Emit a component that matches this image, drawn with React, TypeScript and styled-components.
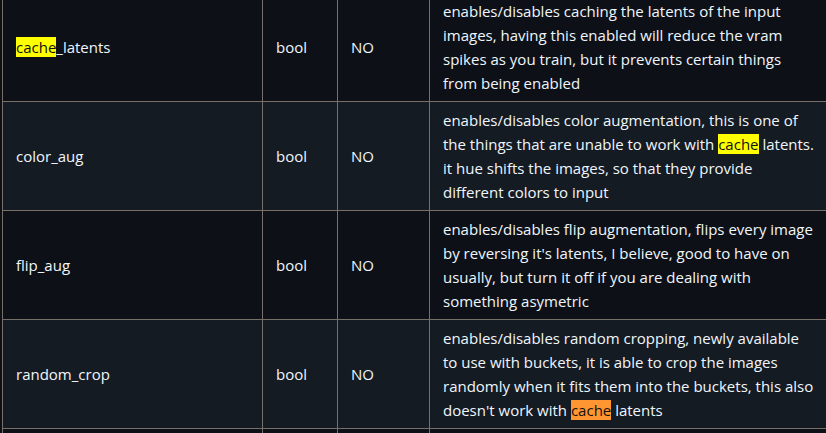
import React from "react";
import styled, { createGlobalStyle } from "styled-components";

const GlobalStyle = createGlobalStyle`
  html, body {
    margin: 0;
    padding: 0;
    background: #0d1117;
    overflow: hidden;
  }
`;

const Page = styled.div`
  padding-left: 2px;
  margin-top: -8px;
  font-family: "Open Sans", "Noto Sans", sans-serif;
  font-size: 15px;
  line-height: 24px;
  color: #f0f6fc;
`;

const Table = styled.table`
  border-collapse: collapse;
  border-spacing: 0;
  table-layout: fixed;
  width: 840px;
`;

const Row = styled.tr`
  background: #0d1117;

  &:nth-child(2n) {
    background: #151b23;
  }
`;

const Cell = styled.td<{ $width?: number }>`
  border: 1px solid #776f68;
  padding: 6px 13px;
  vertical-align: middle;
  ${(p) => (p.$width ? `width: ${p.$width}px;` : "")}
`;

const Mark = styled.mark<{ $active?: boolean }>`
  background: ${(p) => (p.$active ? "#ff9632" : "#ffff00")};
  color: #111111;
`;

type Param = {
  name: React.ReactNode;
  type: string;
  required: string;
  desc: React.ReactNode[];
};

// lines are split where the original page wraps them
const params: Param[] = [
  {
    name: (
      <>
        <Mark>cache</Mark>_latents
      </>
    ),
    type: "bool",
    required: "NO",
    desc: [
      "enables/disables caching the latents of the input",
      "images, having this enabled will reduce the vram",
      "spikes as you train, but it prevents certain things",
      "from being enabled",
    ],
  },
  {
    name: "color_aug",
    type: "bool",
    required: "NO",
    desc: [
      "enables/disables color augmentation, this is one of",
      <>
        the things that are unable to work with <Mark>cache</Mark> latents.
      </>,
      "it hue shifts the images, so that they provide",
      "different colors to input",
    ],
  },
  {
    name: "flip_aug",
    type: "bool",
    required: "NO",
    desc: [
      "enables/disables flip augmentation, flips every image",
      "by reversing it's latents, I believe, good to have on",
      "usually, but turn it off if you are dealing with",
      "something asymetric",
    ],
  },
  {
    name: "random_crop",
    type: "bool",
    required: "NO",
    desc: [
      "enables/disables random cropping, newly available",
      "to use with buckets, it is able to crop the images",
      "randomly when it fits them into the buckets, this also",
      <>
        doesn't work with <Mark $active>cache</Mark> latents
      </>,
    ],
  },
  {
    name: "shuffle_captions",
    type: "bool",
    required: "NO",
    desc: ["shuffles the tokens of the captions when training"],
  },
];

export default function App() {
  return (
    <>
      <GlobalStyle />
      <Page>
        <Table>
          <tbody>
            {params.map((p, i) => (
              <Row key={i}>
                <Cell $width={233}>{p.name}</Cell>
                <Cell $width={48}>{p.type}</Cell>
                <Cell $width={65}>{p.required}</Cell>
                <Cell>
                  {p.desc.map((line, j) => (
                    <React.Fragment key={j}>
                      {j > 0 && <br />}
                      {line}
                    </React.Fragment>
                  ))}
                </Cell>
              </Row>
            ))}
          </tbody>
        </Table>
      </Page>
    </>
  );
}
